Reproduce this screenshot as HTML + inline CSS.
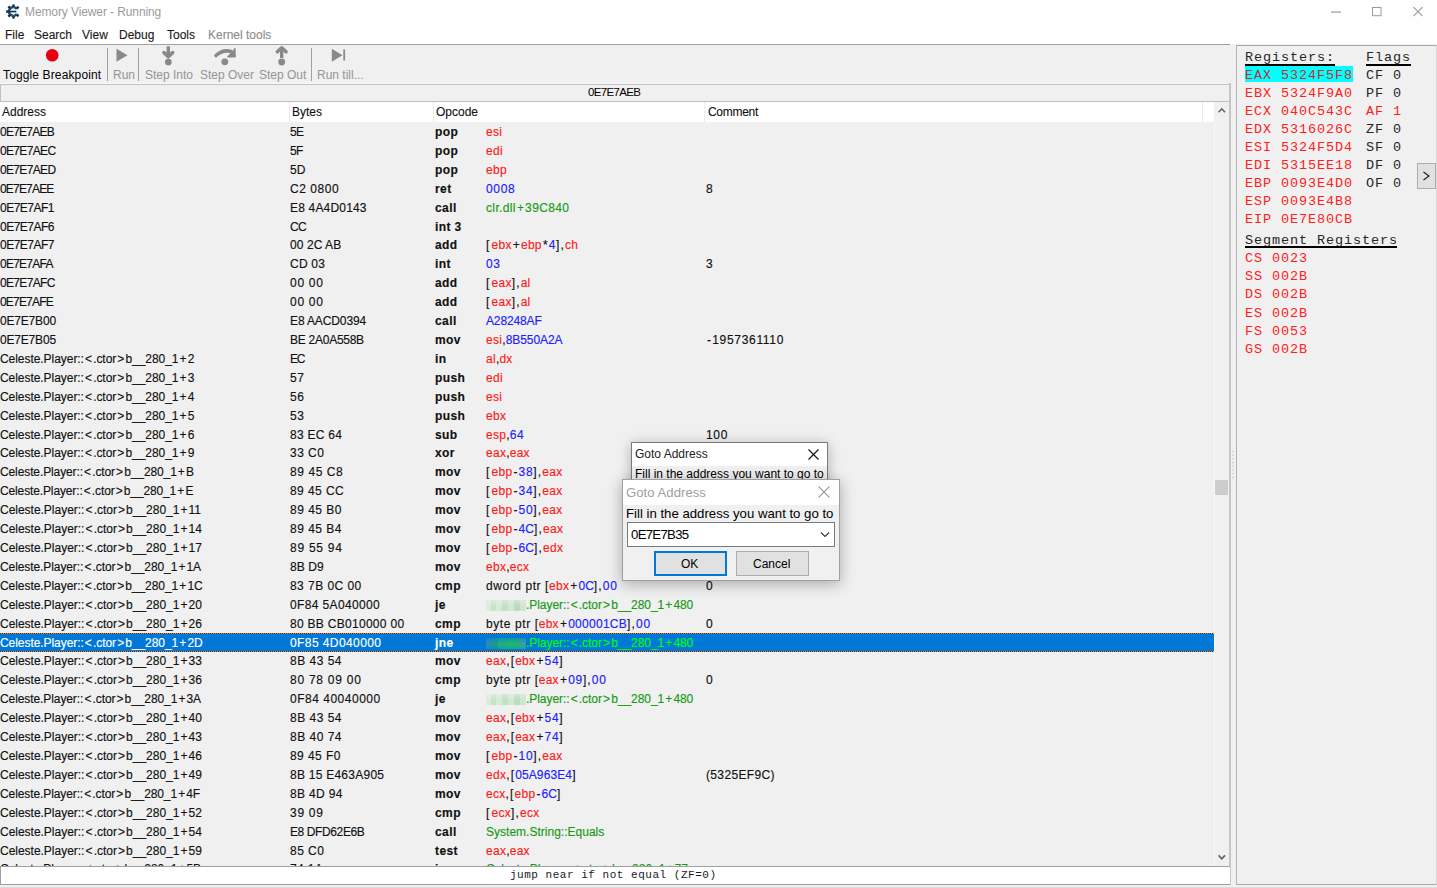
<!DOCTYPE html>
<html><head><meta charset="utf-8">
<style>
*{margin:0;padding:0;box-sizing:border-box}
html,body{width:1437px;height:888px;overflow:hidden;background:#f0f0f0;font-family:"Liberation Sans",sans-serif;font-size:12px;color:#000}
.abs{position:absolute}
#title{position:absolute;left:0;top:0;width:1437px;height:44px;background:#fff}
#ttext{position:absolute;left:25px;top:4px;color:#9c9c9c;font-size:12px;line-height:16px;letter-spacing:-0.1px}
.menu{position:absolute;top:28px;font-size:12px;line-height:14px;color:#1a1a1a;-webkit-text-stroke:0.12px}
#tbline{position:absolute;left:0;top:44px;width:1230px;height:1px;background:#a0a0a0}
.tbl{position:absolute;top:68px;font-size:12px;line-height:14px;color:#959595;white-space:nowrap}
.sep{position:absolute;top:48px;width:1px;height:33px;background:#a0a0a0}
#addrbar{position:absolute;left:0;top:84px;width:1230px;height:18px;background:#f0f0f0;border-top:1px solid #c2c2c2;border-left:1px solid #c2c2c2;border-bottom:1px solid #bdbdbd;border-right:1px solid #a8a8a8;box-shadow:0 -1px 0 #fafafa}
#addrtxt{position:absolute;left:588px;top:86px;font-size:11.5px;line-height:13px;color:#000;letter-spacing:-0.66px}
#hdr{position:absolute;left:0;top:102px;width:1214px;height:20px;background:#fff}
.hc{position:absolute;top:105px;font-size:12px;line-height:14px;color:#111;-webkit-text-stroke:0.1px}
.hs{position:absolute;top:102px;width:1px;height:20px;background:#ececec}
#list{position:absolute;left:0;top:122px;width:1214px;height:744px;overflow:hidden;background:#f0f0f0}
.row{position:absolute;left:0;width:1214px;height:19px;white-space:nowrap;font-size:12px;line-height:19px;-webkit-text-stroke:0.15px;color:#111}
.row span{position:absolute;margin-top:1px}
.row .a{left:0;top:0}
.row .by{left:290px;top:0}
.row .op{left:435px;top:0;font-weight:bold;letter-spacing:0.4px}
.row .arg{left:486px;top:0}
.row .arg span{position:static;margin-top:0}
.pp{font-style:normal}
.row .cm{left:706px;top:0}
.r{color:#ff1a1a}.b{color:#2020ff}.g{color:#169a16}.k{color:#111}
.blur{display:inline-block;width:40px;height:11px;vertical-align:-2px;background:linear-gradient(180deg,rgba(240,240,240,0.45),rgba(240,240,240,0) 55%),linear-gradient(90deg,#dcecdc 0 12%,#c8e4c8 12% 25%,#d6ead6 25% 40%,#c2e0c2 40% 55%,#d2e8d2 55% 70%,#bcdcbc 70% 84%,#cfe6cf 84% 100%)}
.hl{background:#0078d7;color:#fff}
.hl::before,.hl::after{content:"";position:absolute;left:0;width:1214px;height:1px;background:repeating-linear-gradient(90deg,#2a3040 0 1px,#e88a3a 1px 2px)}
.hl::before{top:0}.hl::after{bottom:0}
.hl .r,.hl .k{color:#fff}.hl .g{color:#00ff00}
.hl .blur{background:linear-gradient(180deg,rgba(0,120,215,0.55),rgba(0,120,215,0.1) 50%,rgba(0,120,215,0.3)),linear-gradient(90deg,#2a8fb0 0 14%,#1d9f8a 14% 30%,#22b870 30% 55%,#1fc064 55% 80%,#3aa890 80% 100%)}
#vscroll{position:absolute;left:1214px;top:102px;width:16px;height:764px;background:#f0f0f0}
#status{position:absolute;left:0;top:866px;width:1230px;height:19px;background:#fff;border-top:1px solid #a0a0a0;border-left:1px solid #a0a0a0;border-bottom:1px solid #a0a0a0}
#stxt{position:absolute;left:510px;top:867px;font-family:"Liberation Mono",monospace;font-size:11px;letter-spacing:0.52px;line-height:16px;color:#1a1a1a}
#reg{position:absolute;left:1236px;top:45px;width:201px;height:840px;background:#f0f0f0;border-left:1px solid #b4b4b4;border-top:1px solid #a8a8a8;border-bottom:1px solid #a8a8a8;border-right:1px solid #dadada}
.rg{position:absolute;font-family:"Liberation Mono",monospace;font-size:13.5px;letter-spacing:0.9px;line-height:18px;color:#ff2020;white-space:pre}
.rgk{color:#262626}
.dt{font-size:12px;line-height:16px;white-space:nowrap}
.dt2{font-size:13.2px;line-height:17px;white-space:nowrap}
</style></head><body>
<div id="title"></div>
<svg class="abs" style="left:4px;top:3px" width="18" height="18" viewBox="0 0 18 18">
<path d="M12.78 5.97 A4.3 4.3 0 1 0 12.78 11.03" fill="none" stroke="#10334f" stroke-width="2.3"/>
<path d="M13.02 6.35 A4.3 4.3 0 1 0 13.02 10.65" fill="none" stroke="#1d6a98" stroke-width="0.9"/>
<g fill="#10334f"><rect x="12.48" y="3.35" width="2.4" height="2.4" transform="rotate(-42 13.68 4.55)"/><rect x="8.31" y="1.40" width="2.4" height="2.4" transform="rotate(-88 9.51 2.60)"/><rect x="4.00" y="3.06" width="2.4" height="2.4" transform="rotate(-134 5.20 4.26)"/><rect x="2.20" y="7.30" width="2.4" height="2.4" transform="rotate(180 3.40 8.50)"/><rect x="4.00" y="11.54" width="2.4" height="2.4" transform="rotate(134 5.20 12.74)"/><rect x="8.31" y="13.20" width="2.4" height="2.4" transform="rotate(88 9.51 14.40)"/><rect x="12.48" y="11.25" width="2.4" height="2.4" transform="rotate(42 13.68 12.45)"/><rect x="2.8" y="7.7" width="9.6" height="1.7"/></g></svg>
<svg class="abs" style="left:1325px;top:0" width="112" height="24">
<rect x="6" y="11.5" width="10" height="1.2" fill="#9a9a9a"/>
<rect x="47.5" y="7.5" width="8.5" height="8.2" fill="none" stroke="#9a9a9a" stroke-width="1"/>
<path d="M88.5 7.2 L97.5 16.2 M97.5 7.2 L88.5 16.2" stroke="#9a9a9a" stroke-width="1.1"/>
</svg>
<div id="ttext">Memory Viewer - Running</div>
<div class="menu" style="left:5px">File</div>
<div class="menu" style="left:34px">Search</div>
<div class="menu" style="left:82px">View</div>
<div class="menu" style="left:119px">Debug</div>
<div class="menu" style="left:167px">Tools</div>
<div class="menu" style="left:208px;color:#8c8c8c">Kernel tools</div>
<div id="tbline"></div>

<svg class="abs" style="left:45px;top:48px" width="15" height="15"><circle cx="7.2" cy="7.2" r="6.3" fill="#e50012"/></svg>
<div class="tbl" style="left:3px;color:#000;letter-spacing:0.13px">Toggle Breakpoint</div>
<div class="sep" style="left:107px"></div>
<div class="tbl" style="left:113px">Run</div>
<svg class="abs" style="left:110px;top:44px" width="250" height="24">
<g fill="#898989">
<path d="M6.5 4.7 L17.5 11.2 L6.5 17.8 Z"/>
<rect x="56.6" y="2.3" width="3.4" height="9.2"/>
<path d="M54 8.6 L58.3 12.6 L62.6 8.6" fill="none" stroke="#898989" stroke-width="3.6" stroke-linejoin="round" stroke-linecap="round"/>
<circle cx="58.3" cy="18.1" r="3.4"/>
<path d="M106 11.5 Q112.5 5.5 120.5 7.2" fill="none" stroke="#898989" stroke-width="3.6" stroke-linecap="round"/>
<path d="M117.5 13 L125.3 13 L125 4.3 Z" stroke="#898989" stroke-width="1" stroke-linejoin="round"/>
<circle cx="114.8" cy="17.8" r="3.4"/>
<rect x="170" y="5.5" width="3.4" height="8.5"/>
<path d="M167.4 7.8 L171.7 3.8 L176 7.8" fill="none" stroke="#898989" stroke-width="3.6" stroke-linejoin="round" stroke-linecap="round"/>
<circle cx="171.7" cy="18" r="3.4"/>
<path d="M221.8 4.7 L232.5 11.2 L221.8 17.7 Z"/>
<rect x="233.3" y="5.5" width="1.8" height="11"/>
</g></svg>
<div class="sep" style="left:138px"></div>
<div class="tbl" style="left:145px">Step Into</div>
<div class="tbl" style="left:200px">Step Over</div>
<div class="tbl" style="left:259px">Step Out</div>
<div class="sep" style="left:311px"></div>
<div class="tbl" style="left:317px">Run till...</div>

<div id="addrbar"></div>
<div id="addrtxt">0E7E7AEB</div>
<div id="hdr"></div>
<div class="hc" style="left:2px">Address</div>
<div class="hs" style="left:289px"></div>
<div class="hc" style="left:292px">Bytes</div>
<div class="hs" style="left:433px"></div>
<div class="hc" style="left:436px">Opcode</div>
<div class="hs" style="left:704px"></div>
<div class="hc" style="left:708px;letter-spacing:-0.3px">Comment</div>
<div class="hs" style="left:1202px"></div>

<div id="list">
<div class="row" style="top:0.00px"><span class="a" style="letter-spacing:-0.75px">0E7E7AEB</span><span class="by" style="letter-spacing:-0.56px">5E</span><span class="op">pop</span><span class="arg"><span class="r" style="letter-spacing:0.29px">esi</span></span><span class="cm"></span></div>
<div class="row" style="top:18.91px"><span class="a" style="letter-spacing:-0.66px">0E7E7AEC</span><span class="by" style="letter-spacing:-0.56px">5F</span><span class="op">pop</span><span class="arg"><span class="r" style="letter-spacing:0.29px">edi</span></span><span class="cm"></span></div>
<div class="row" style="top:37.82px"><span class="a" style="letter-spacing:-0.66px">0E7E7AED</span><span class="by" style="letter-spacing:0.04px">5D</span><span class="op">pop</span><span class="arg"><span class="r" style="letter-spacing:0.29px">ebp</span></span><span class="cm"></span></div>
<div class="row" style="top:56.73px"><span class="a" style="letter-spacing:-0.81px">0E7E7AEE</span><span class="by" style="letter-spacing:0.54px">C2 0800</span><span class="op">ret</span><span class="arg"><span class="b" style="letter-spacing:0.69px">0008</span></span><span class="cm" style="letter-spacing:0.69px">8</span></div>
<div class="row" style="top:75.64px"><span class="a" style="letter-spacing:-0.50px">0E7E7AF1</span><span class="by" style="letter-spacing:0.18px">E8 4A4D0143</span><span class="op">call</span><span class="arg"><span class="g" style="letter-spacing:0.36px">clr.dll<i class="pp" style="padding-left:1.11px;padding-right:0.75px">+</i>39C840</span></span><span class="cm"></span></div>
<div class="row" style="top:94.55px"><span class="a" style="letter-spacing:-0.50px">0E7E7AF6</span><span class="by" style="letter-spacing:-0.60px">CC</span><span class="op">int 3</span><span class="arg"></span><span class="cm"></span></div>
<div class="row" style="top:113.46px"><span class="a" style="letter-spacing:-0.50px">0E7E7AF7</span><span class="by" style="letter-spacing:0.07px">00 2C AB</span><span class="op">add</span><span class="arg"><span class="k" style="letter-spacing:2.14px">[</span><span class="r" style="letter-spacing:0.29px">ebx</span><span class="k"><i class="pp" style="padding-left:1.11px;padding-right:1.11px">+</i></span><span class="r" style="letter-spacing:0.29px">ebp</span><span class="k"><i class="pp" style="padding-left:1.11px;padding-right:1.11px">*</i></span><span class="b" style="letter-spacing:0.69px">4</span><span class="k" style="letter-spacing:1.13px">],</span><span class="r" style="letter-spacing:0.29px">ch</span></span><span class="cm"></span></div>
<div class="row" style="top:132.37px"><span class="a" style="letter-spacing:-0.75px">0E7E7AFA</span><span class="by" style="letter-spacing:0.22px">CD 03</span><span class="op">int</span><span class="arg"><span class="b" style="letter-spacing:0.69px">03</span></span><span class="cm" style="letter-spacing:0.69px">3</span></div>
<div class="row" style="top:151.28px"><span class="a" style="letter-spacing:-0.66px">0E7E7AFC</span><span class="by" style="letter-spacing:0.73px">00 00</span><span class="op">add</span><span class="arg"><span class="k" style="letter-spacing:2.14px">[</span><span class="r" style="letter-spacing:0.29px">eax</span><span class="k" style="letter-spacing:1.13px">],</span><span class="r" style="letter-spacing:0.29px">al</span></span><span class="cm"></span></div>
<div class="row" style="top:170.19px"><span class="a" style="letter-spacing:-0.81px">0E7E7AFE</span><span class="by" style="letter-spacing:0.73px">00 00</span><span class="op">add</span><span class="arg"><span class="k" style="letter-spacing:2.14px">[</span><span class="r" style="letter-spacing:0.29px">eax</span><span class="k" style="letter-spacing:1.13px">],</span><span class="r" style="letter-spacing:0.29px">al</span></span><span class="cm"></span></div>
<div class="row" style="top:189.10px"><span class="a" style="letter-spacing:-0.19px">0E7E7B00</span><span class="by" style="letter-spacing:-0.12px">E8 AACD0394</span><span class="op">call</span><span class="arg"><span class="b" style="letter-spacing:-0.13px">A28248AF</span></span><span class="cm"></span></div>
<div class="row" style="top:208.01px"><span class="a" style="letter-spacing:-0.19px">0E7E7B05</span><span class="by" style="letter-spacing:-0.26px">BE 2A0A558B</span><span class="op">mov</span><span class="arg"><span class="r" style="letter-spacing:0.29px">esi</span><span class="k" style="letter-spacing:0.12px">,</span><span class="b" style="letter-spacing:-0.07px">8B550A2A</span></span><span class="cm" style="letter-spacing:0.69px"><i class="pp" style="padding-left:1.11px;padding-right:0.42px">-</i>1957361110</span></div>
<div class="row" style="top:226.92px"><span class="a" style="letter-spacing:-0.05px">Celeste.Player::<i class="pp" style="padding-left:1.11px;padding-right:1.16px">&lt;</i>.ctor<i class="pp" style="padding-left:1.11px;padding-right:1.16px">&gt;</i>b__280_1<i class="pp" style="padding-left:1.11px;padding-right:1.16px">+</i>2</span><span class="by" style="letter-spacing:-1.21px">EC</span><span class="op">in</span><span class="arg"><span class="r" style="letter-spacing:0.29px">al</span><span class="k" style="letter-spacing:0.12px">,</span><span class="r" style="letter-spacing:0.29px">dx</span></span><span class="cm"></span></div>
<div class="row" style="top:245.83px"><span class="a" style="letter-spacing:-0.05px">Celeste.Player::<i class="pp" style="padding-left:1.11px;padding-right:1.16px">&lt;</i>.ctor<i class="pp" style="padding-left:1.11px;padding-right:1.16px">&gt;</i>b__280_1<i class="pp" style="padding-left:1.11px;padding-right:1.16px">+</i>3</span><span class="by" style="letter-spacing:0.69px">57</span><span class="op">push</span><span class="arg"><span class="r" style="letter-spacing:0.29px">edi</span></span><span class="cm"></span></div>
<div class="row" style="top:264.74px"><span class="a" style="letter-spacing:-0.05px">Celeste.Player::<i class="pp" style="padding-left:1.11px;padding-right:1.16px">&lt;</i>.ctor<i class="pp" style="padding-left:1.11px;padding-right:1.16px">&gt;</i>b__280_1<i class="pp" style="padding-left:1.11px;padding-right:1.16px">+</i>4</span><span class="by" style="letter-spacing:0.69px">56</span><span class="op">push</span><span class="arg"><span class="r" style="letter-spacing:0.29px">esi</span></span><span class="cm"></span></div>
<div class="row" style="top:283.65px"><span class="a" style="letter-spacing:-0.05px">Celeste.Player::<i class="pp" style="padding-left:1.11px;padding-right:1.16px">&lt;</i>.ctor<i class="pp" style="padding-left:1.11px;padding-right:1.16px">&gt;</i>b__280_1<i class="pp" style="padding-left:1.11px;padding-right:1.16px">+</i>5</span><span class="by" style="letter-spacing:0.69px">53</span><span class="op">push</span><span class="arg"><span class="r" style="letter-spacing:0.29px">ebx</span></span><span class="cm"></span></div>
<div class="row" style="top:302.56px"><span class="a" style="letter-spacing:-0.05px">Celeste.Player::<i class="pp" style="padding-left:1.11px;padding-right:1.16px">&lt;</i>.ctor<i class="pp" style="padding-left:1.11px;padding-right:1.16px">&gt;</i>b__280_1<i class="pp" style="padding-left:1.11px;padding-right:1.16px">+</i>6</span><span class="by" style="letter-spacing:0.27px">83 EC 64</span><span class="op">sub</span><span class="arg"><span class="r" style="letter-spacing:0.29px">esp</span><span class="k" style="letter-spacing:0.12px">,</span><span class="b" style="letter-spacing:0.69px">64</span></span><span class="cm" style="letter-spacing:0.69px">100</span></div>
<div class="row" style="top:321.47px"><span class="a" style="letter-spacing:-0.05px">Celeste.Player::<i class="pp" style="padding-left:1.11px;padding-right:1.16px">&lt;</i>.ctor<i class="pp" style="padding-left:1.11px;padding-right:1.16px">&gt;</i>b__280_1<i class="pp" style="padding-left:1.11px;padding-right:1.16px">+</i>9</span><span class="by" style="letter-spacing:0.47px">33 C0</span><span class="op">xor</span><span class="arg"><span class="r" style="letter-spacing:0.29px">eax</span><span class="k" style="letter-spacing:0.12px">,</span><span class="r" style="letter-spacing:0.29px">eax</span></span><span class="cm"></span></div>
<div class="row" style="top:340.38px"><span class="a" style="letter-spacing:-0.11px">Celeste.Player::<i class="pp" style="padding-left:1.11px;padding-right:1.22px">&lt;</i>.ctor<i class="pp" style="padding-left:1.11px;padding-right:1.22px">&gt;</i>b__280_1<i class="pp" style="padding-left:1.11px;padding-right:1.22px">+</i>B</span><span class="by" style="letter-spacing:0.58px">89 45 C8</span><span class="op">mov</span><span class="arg"><span class="k" style="letter-spacing:2.14px">[</span><span class="r" style="letter-spacing:0.29px">ebp</span><span class="k"><i class="pp" style="padding-left:1.11px;padding-right:1.11px">-</i></span><span class="b" style="letter-spacing:0.69px">38</span><span class="k" style="letter-spacing:1.13px">],</span><span class="r" style="letter-spacing:0.29px">eax</span></span><span class="cm"></span></div>
<div class="row" style="top:359.29px"><span class="a" style="letter-spacing:-0.13px">Celeste.Player::<i class="pp" style="padding-left:1.11px;padding-right:1.24px">&lt;</i>.ctor<i class="pp" style="padding-left:1.11px;padding-right:1.24px">&gt;</i>b__280_1<i class="pp" style="padding-left:1.11px;padding-right:1.24px">+</i>E</span><span class="by" style="letter-spacing:0.42px">89 45 CC</span><span class="op">mov</span><span class="arg"><span class="k" style="letter-spacing:2.14px">[</span><span class="r" style="letter-spacing:0.29px">ebp</span><span class="k"><i class="pp" style="padding-left:1.11px;padding-right:1.11px">-</i></span><span class="b" style="letter-spacing:0.69px">34</span><span class="k" style="letter-spacing:1.13px">],</span><span class="r" style="letter-spacing:0.29px">eax</span></span><span class="cm"></span></div>
<div class="row" style="top:378.20px"><span class="a" style="letter-spacing:-0.02px">Celeste.Player::<i class="pp" style="padding-left:1.11px;padding-right:1.13px">&lt;</i>.ctor<i class="pp" style="padding-left:1.11px;padding-right:1.13px">&gt;</i>b__280_1<i class="pp" style="padding-left:1.11px;padding-right:1.13px">+</i>11</span><span class="by" style="letter-spacing:0.49px">89 45 B0</span><span class="op">mov</span><span class="arg"><span class="k" style="letter-spacing:2.14px">[</span><span class="r" style="letter-spacing:0.29px">ebp</span><span class="k"><i class="pp" style="padding-left:1.11px;padding-right:1.11px">-</i></span><span class="b" style="letter-spacing:0.69px">50</span><span class="k" style="letter-spacing:1.13px">],</span><span class="r" style="letter-spacing:0.29px">eax</span></span><span class="cm"></span></div>
<div class="row" style="top:397.11px"><span class="a" style="letter-spacing:-0.02px">Celeste.Player::<i class="pp" style="padding-left:1.11px;padding-right:1.13px">&lt;</i>.ctor<i class="pp" style="padding-left:1.11px;padding-right:1.13px">&gt;</i>b__280_1<i class="pp" style="padding-left:1.11px;padding-right:1.13px">+</i>14</span><span class="by" style="letter-spacing:0.49px">89 45 B4</span><span class="op">mov</span><span class="arg"><span class="k" style="letter-spacing:2.14px">[</span><span class="r" style="letter-spacing:0.29px">ebp</span><span class="k"><i class="pp" style="padding-left:1.11px;padding-right:1.11px">-</i></span><span class="b" style="letter-spacing:0.04px">4C</span><span class="k" style="letter-spacing:1.13px">],</span><span class="r" style="letter-spacing:0.29px">eax</span></span><span class="cm"></span></div>
<div class="row" style="top:416.02px"><span class="a" style="letter-spacing:-0.02px">Celeste.Player::<i class="pp" style="padding-left:1.11px;padding-right:1.13px">&lt;</i>.ctor<i class="pp" style="padding-left:1.11px;padding-right:1.13px">&gt;</i>b__280_1<i class="pp" style="padding-left:1.11px;padding-right:1.13px">+</i>17</span><span class="by" style="letter-spacing:0.74px">89 55 94</span><span class="op">mov</span><span class="arg"><span class="k" style="letter-spacing:2.14px">[</span><span class="r" style="letter-spacing:0.29px">ebp</span><span class="k"><i class="pp" style="padding-left:1.11px;padding-right:1.11px">-</i></span><span class="b" style="letter-spacing:0.04px">6C</span><span class="k" style="letter-spacing:1.13px">],</span><span class="r" style="letter-spacing:0.29px">edx</span></span><span class="cm"></span></div>
<div class="row" style="top:434.93px"><span class="a" style="letter-spacing:-0.09px">Celeste.Player::<i class="pp" style="padding-left:1.11px;padding-right:1.20px">&lt;</i>.ctor<i class="pp" style="padding-left:1.11px;padding-right:1.20px">&gt;</i>b__280_1<i class="pp" style="padding-left:1.11px;padding-right:1.20px">+</i>1A</span><span class="by" style="letter-spacing:0.07px">8B D9</span><span class="op">mov</span><span class="arg"><span class="r" style="letter-spacing:0.29px">ebx</span><span class="k" style="letter-spacing:0.12px">,</span><span class="r" style="letter-spacing:0.29px">ecx</span></span><span class="cm"></span></div>
<div class="row" style="top:453.84px"><span class="a" style="letter-spacing:-0.06px">Celeste.Player::<i class="pp" style="padding-left:1.11px;padding-right:1.17px">&lt;</i>.ctor<i class="pp" style="padding-left:1.11px;padding-right:1.17px">&gt;</i>b__280_1<i class="pp" style="padding-left:1.11px;padding-right:1.17px">+</i>1C</span><span class="by" style="letter-spacing:0.45px">83 7B 0C 00</span><span class="op">cmp</span><span class="arg"><span class="k" style="letter-spacing:0.57px">dword ptr [</span><span class="r" style="letter-spacing:0.29px">ebx</span><span class="k"><i class="pp" style="padding-left:1.11px;padding-right:1.11px">+</i></span><span class="b" style="letter-spacing:0.04px">0C</span><span class="k" style="letter-spacing:1.13px">],</span><span class="b" style="letter-spacing:0.69px">00</span></span><span class="cm" style="letter-spacing:0.69px">0</span></div>
<div class="row" style="top:472.75px"><span class="a" style="letter-spacing:-0.02px">Celeste.Player::<i class="pp" style="padding-left:1.11px;padding-right:1.13px">&lt;</i>.ctor<i class="pp" style="padding-left:1.11px;padding-right:1.13px">&gt;</i>b__280_1<i class="pp" style="padding-left:1.11px;padding-right:1.13px">+</i>20</span><span class="by" style="letter-spacing:0.36px">0F84 5A040000</span><span class="op">je</span><span class="arg"><i class="blur"></i><span class="g" style="letter-spacing:-0.05px">.Player::<i class="pp" style="padding-left:1.11px;padding-right:1.16px">&lt;</i>.ctor<i class="pp" style="padding-left:1.11px;padding-right:1.16px">&gt;</i>b__280_1<i class="pp" style="padding-left:1.11px;padding-right:1.16px">+</i>480</span></span><span class="cm"></span></div>
<div class="row" style="top:491.66px"><span class="a" style="letter-spacing:-0.02px">Celeste.Player::<i class="pp" style="padding-left:1.11px;padding-right:1.13px">&lt;</i>.ctor<i class="pp" style="padding-left:1.11px;padding-right:1.13px">&gt;</i>b__280_1<i class="pp" style="padding-left:1.11px;padding-right:1.13px">+</i>26</span><span class="by" style="letter-spacing:0.29px">80 BB CB010000 00</span><span class="op">cmp</span><span class="arg"><span class="k" style="letter-spacing:0.60px">byte ptr [</span><span class="r" style="letter-spacing:0.29px">ebx</span><span class="k"><i class="pp" style="padding-left:1.11px;padding-right:1.11px">+</i></span><span class="b" style="letter-spacing:0.28px">000001CB</span><span class="k" style="letter-spacing:1.13px">],</span><span class="b" style="letter-spacing:0.69px">00</span></span><span class="cm" style="letter-spacing:0.69px">0</span></div>
<div class="row hl" style="top:510.57px"><span class="a" style="letter-spacing:-0.06px">Celeste.Player::<i class="pp" style="padding-left:1.11px;padding-right:1.17px">&lt;</i>.ctor<i class="pp" style="padding-left:1.11px;padding-right:1.17px">&gt;</i>b__280_1<i class="pp" style="padding-left:1.11px;padding-right:1.17px">+</i>2D</span><span class="by" style="letter-spacing:0.41px">0F85 4D040000</span><span class="op">jne</span><span class="arg"><i class="blur"></i><span class="g" style="letter-spacing:-0.05px">.Player::<i class="pp" style="padding-left:1.11px;padding-right:1.16px">&lt;</i>.ctor<i class="pp" style="padding-left:1.11px;padding-right:1.16px">&gt;</i>b__280_1<i class="pp" style="padding-left:1.11px;padding-right:1.16px">+</i>480</span></span><span class="cm"></span></div>
<div class="row" style="top:529.48px"><span class="a" style="letter-spacing:-0.02px">Celeste.Player::<i class="pp" style="padding-left:1.11px;padding-right:1.13px">&lt;</i>.ctor<i class="pp" style="padding-left:1.11px;padding-right:1.13px">&gt;</i>b__280_1<i class="pp" style="padding-left:1.11px;padding-right:1.13px">+</i>33</span><span class="by" style="letter-spacing:0.49px">8B 43 54</span><span class="op">mov</span><span class="arg"><span class="r" style="letter-spacing:0.29px">eax</span><span class="k" style="letter-spacing:1.13px">,[</span><span class="r" style="letter-spacing:0.29px">ebx</span><span class="k"><i class="pp" style="padding-left:1.11px;padding-right:1.11px">+</i></span><span class="b" style="letter-spacing:0.69px">54</span><span class="k" style="letter-spacing:2.14px">]</span></span><span class="cm"></span></div>
<div class="row" style="top:548.39px"><span class="a" style="letter-spacing:-0.02px">Celeste.Player::<i class="pp" style="padding-left:1.11px;padding-right:1.13px">&lt;</i>.ctor<i class="pp" style="padding-left:1.11px;padding-right:1.13px">&gt;</i>b__280_1<i class="pp" style="padding-left:1.11px;padding-right:1.13px">+</i>36</span><span class="by" style="letter-spacing:0.75px">80 78 09 00</span><span class="op">cmp</span><span class="arg"><span class="k" style="letter-spacing:0.60px">byte ptr [</span><span class="r" style="letter-spacing:0.29px">eax</span><span class="k"><i class="pp" style="padding-left:1.11px;padding-right:1.11px">+</i></span><span class="b" style="letter-spacing:0.69px">09</span><span class="k" style="letter-spacing:1.13px">],</span><span class="b" style="letter-spacing:0.69px">00</span></span><span class="cm" style="letter-spacing:0.69px">0</span></div>
<div class="row" style="top:567.30px"><span class="a" style="letter-spacing:-0.09px">Celeste.Player::<i class="pp" style="padding-left:1.11px;padding-right:1.20px">&lt;</i>.ctor<i class="pp" style="padding-left:1.11px;padding-right:1.20px">&gt;</i>b__280_1<i class="pp" style="padding-left:1.11px;padding-right:1.20px">+</i>3A</span><span class="by" style="letter-spacing:0.51px">0F84 40040000</span><span class="op">je</span><span class="arg"><i class="blur"></i><span class="g" style="letter-spacing:-0.05px">.Player::<i class="pp" style="padding-left:1.11px;padding-right:1.16px">&lt;</i>.ctor<i class="pp" style="padding-left:1.11px;padding-right:1.16px">&gt;</i>b__280_1<i class="pp" style="padding-left:1.11px;padding-right:1.16px">+</i>480</span></span><span class="cm"></span></div>
<div class="row" style="top:586.21px"><span class="a" style="letter-spacing:-0.02px">Celeste.Player::<i class="pp" style="padding-left:1.11px;padding-right:1.13px">&lt;</i>.ctor<i class="pp" style="padding-left:1.11px;padding-right:1.13px">&gt;</i>b__280_1<i class="pp" style="padding-left:1.11px;padding-right:1.13px">+</i>40</span><span class="by" style="letter-spacing:0.49px">8B 43 54</span><span class="op">mov</span><span class="arg"><span class="r" style="letter-spacing:0.29px">eax</span><span class="k" style="letter-spacing:1.13px">,[</span><span class="r" style="letter-spacing:0.29px">ebx</span><span class="k"><i class="pp" style="padding-left:1.11px;padding-right:1.11px">+</i></span><span class="b" style="letter-spacing:0.69px">54</span><span class="k" style="letter-spacing:2.14px">]</span></span><span class="cm"></span></div>
<div class="row" style="top:605.12px"><span class="a" style="letter-spacing:-0.02px">Celeste.Player::<i class="pp" style="padding-left:1.11px;padding-right:1.13px">&lt;</i>.ctor<i class="pp" style="padding-left:1.11px;padding-right:1.13px">&gt;</i>b__280_1<i class="pp" style="padding-left:1.11px;padding-right:1.13px">+</i>43</span><span class="by" style="letter-spacing:0.49px">8B 40 74</span><span class="op">mov</span><span class="arg"><span class="r" style="letter-spacing:0.29px">eax</span><span class="k" style="letter-spacing:1.13px">,[</span><span class="r" style="letter-spacing:0.29px">eax</span><span class="k"><i class="pp" style="padding-left:1.11px;padding-right:1.11px">+</i></span><span class="b" style="letter-spacing:0.69px">74</span><span class="k" style="letter-spacing:2.14px">]</span></span><span class="cm"></span></div>
<div class="row" style="top:624.03px"><span class="a" style="letter-spacing:-0.02px">Celeste.Player::<i class="pp" style="padding-left:1.11px;padding-right:1.13px">&lt;</i>.ctor<i class="pp" style="padding-left:1.11px;padding-right:1.13px">&gt;</i>b__280_1<i class="pp" style="padding-left:1.11px;padding-right:1.13px">+</i>46</span><span class="by" style="letter-spacing:0.43px">89 45 F0</span><span class="op">mov</span><span class="arg"><span class="k" style="letter-spacing:2.14px">[</span><span class="r" style="letter-spacing:0.29px">ebp</span><span class="k"><i class="pp" style="padding-left:1.11px;padding-right:1.11px">-</i></span><span class="b" style="letter-spacing:0.69px">10</span><span class="k" style="letter-spacing:1.13px">],</span><span class="r" style="letter-spacing:0.29px">eax</span></span><span class="cm"></span></div>
<div class="row" style="top:642.94px"><span class="a" style="letter-spacing:-0.02px">Celeste.Player::<i class="pp" style="padding-left:1.11px;padding-right:1.13px">&lt;</i>.ctor<i class="pp" style="padding-left:1.11px;padding-right:1.13px">&gt;</i>b__280_1<i class="pp" style="padding-left:1.11px;padding-right:1.13px">+</i>49</span><span class="by" style="letter-spacing:0.25px">8B 15 E463A905</span><span class="op">mov</span><span class="arg"><span class="r" style="letter-spacing:0.29px">edx</span><span class="k" style="letter-spacing:1.13px">,[</span><span class="b" style="letter-spacing:0.12px">05A963E4</span><span class="k" style="letter-spacing:2.14px">]</span></span><span class="cm" style="letter-spacing:0.35px">(5325EF9C)</span></div>
<div class="row" style="top:661.85px"><span class="a" style="letter-spacing:-0.10px">Celeste.Player::<i class="pp" style="padding-left:1.11px;padding-right:1.21px">&lt;</i>.ctor<i class="pp" style="padding-left:1.11px;padding-right:1.21px">&gt;</i>b__280_1<i class="pp" style="padding-left:1.11px;padding-right:1.21px">+</i>4F</span><span class="by" style="letter-spacing:0.33px">8B 4D 94</span><span class="op">mov</span><span class="arg"><span class="r" style="letter-spacing:0.29px">ecx</span><span class="k" style="letter-spacing:1.13px">,[</span><span class="r" style="letter-spacing:0.29px">ebp</span><span class="k"><i class="pp" style="padding-left:1.11px;padding-right:1.11px">-</i></span><span class="b" style="letter-spacing:0.04px">6C</span><span class="k" style="letter-spacing:2.14px">]</span></span><span class="cm"></span></div>
<div class="row" style="top:680.76px"><span class="a" style="letter-spacing:-0.02px">Celeste.Player::<i class="pp" style="padding-left:1.11px;padding-right:1.13px">&lt;</i>.ctor<i class="pp" style="padding-left:1.11px;padding-right:1.13px">&gt;</i>b__280_1<i class="pp" style="padding-left:1.11px;padding-right:1.13px">+</i>52</span><span class="by" style="letter-spacing:0.73px">39 09</span><span class="op">cmp</span><span class="arg"><span class="k" style="letter-spacing:2.14px">[</span><span class="r" style="letter-spacing:0.29px">ecx</span><span class="k" style="letter-spacing:1.13px">],</span><span class="r" style="letter-spacing:0.29px">ecx</span></span><span class="cm"></span></div>
<div class="row" style="top:699.67px"><span class="a" style="letter-spacing:-0.02px">Celeste.Player::<i class="pp" style="padding-left:1.11px;padding-right:1.13px">&lt;</i>.ctor<i class="pp" style="padding-left:1.11px;padding-right:1.13px">&gt;</i>b__280_1<i class="pp" style="padding-left:1.11px;padding-right:1.13px">+</i>54</span><span class="by" style="letter-spacing:-0.39px">E8 DFD62E6B</span><span class="op">call</span><span class="arg"><span class="g" style="letter-spacing:0.01px">System.String::Equals</span></span><span class="cm"></span></div>
<div class="row" style="top:718.58px"><span class="a" style="letter-spacing:-0.02px">Celeste.Player::<i class="pp" style="padding-left:1.11px;padding-right:1.13px">&lt;</i>.ctor<i class="pp" style="padding-left:1.11px;padding-right:1.13px">&gt;</i>b__280_1<i class="pp" style="padding-left:1.11px;padding-right:1.13px">+</i>59</span><span class="by" style="letter-spacing:0.47px">85 C0</span><span class="op">test</span><span class="arg"><span class="r" style="letter-spacing:0.29px">eax</span><span class="k" style="letter-spacing:0.12px">,</span><span class="r" style="letter-spacing:0.29px">eax</span></span><span class="cm"></span></div>
<div class="row" style="top:737.49px"><span class="a" style="letter-spacing:-0.09px">Celeste.Player::<i class="pp" style="padding-left:1.11px;padding-right:1.20px">&lt;</i>.ctor<i class="pp" style="padding-left:1.11px;padding-right:1.20px">&gt;</i>b__280_1<i class="pp" style="padding-left:1.11px;padding-right:1.20px">+</i>5B</span><span class="by" style="letter-spacing:0.33px">74 1A</span><span class="op">je</span><span class="arg"><span class="g" style="letter-spacing:-0.02px">Celeste.Player::<i class="pp" style="padding-left:1.11px;padding-right:1.13px">&lt;</i>.ctor<i class="pp" style="padding-left:1.11px;padding-right:1.13px">&gt;</i>b__280_1<i class="pp" style="padding-left:1.11px;padding-right:1.13px">+</i>77</span></span><span class="cm"></span></div>
</div>
<div id="vscroll"></div>
<div class="abs" style="left:1214px;top:122px;width:1px;height:744px;background:#fafafa"></div>
<svg class="abs" style="left:1214px;top:102px" width="16" height="764">
<path d="M4.6 10.2 L7.8 6.8 L11 10.2" fill="none" stroke="#606060" stroke-width="1.6"/>
<path d="M4.6 753.4 L7.8 756.8 L11 753.4" fill="none" stroke="#606060" stroke-width="1.6"/>
<rect x="1" y="378" width="13" height="15" fill="#cdcdcd"/>
</svg>
<div class="abs" style="left:1229px;top:83px;width:2px;height:802px;background:#c6c6c6"></div>

<svg class="abs" style="left:1231px;top:450px" width="5" height="30"><g fill="#a8a8a8"><rect x="1.5" y="1" width="1" height="1"/><rect x="1.5" y="4.7" width="1" height="1"/><rect x="1.5" y="8.4" width="1" height="1"/><rect x="1.5" y="12.1" width="1" height="1"/><rect x="1.5" y="15.8" width="1" height="1"/><rect x="1.5" y="19.5" width="1" height="1"/><rect x="1.5" y="23.2" width="1" height="1"/><rect x="1.5" y="26.9" width="1" height="1"/></g></svg>
<div id="status"></div>
<div id="stxt">jump near if not equal (ZF=0)</div>


<!-- back dialog -->
<div class="abs" style="left:631px;top:442px;width:197px;height:60px;background:#f0f0f0;border:1px solid #7a7a7a;box-shadow:0 2px 12px rgba(0,0,0,0.28)"></div>
<div class="abs" style="left:632px;top:443px;width:195px;height:23px;background:#fff"></div>
<div class="abs dt" style="left:635px;top:446px;color:#222">Goto Address</div>
<svg class="abs" style="left:805px;top:446px" width="16" height="16"><path d="M3.5 3.5 L13.5 13.5 M13.5 3.5 L3.5 13.5" stroke="#1a1a1a" stroke-width="1.2"/></svg>
<div class="abs dt" style="left:635px;top:466px;color:#000">Fill in the address you want to go to</div>
<!-- front dialog -->
<div class="abs" style="left:622px;top:479px;width:218px;height:102px;background:#f0f0f0;border:1px solid #a0a0a0;box-shadow:0 3px 14px rgba(0,0,0,0.30)"></div>
<div class="abs" style="left:623px;top:480px;width:216px;height:25px;background:#fff"></div>
<div class="abs dt2" style="left:626px;top:484px;color:#a0a0a0">Goto Address</div>
<svg class="abs" style="left:815px;top:483px" width="18" height="18"><path d="M3.5 3.5 L14.5 14.5 M14.5 3.5 L3.5 14.5" stroke="#a0a0a0" stroke-width="1.1"/></svg>
<div class="abs dt2" style="left:626px;top:505px;color:#000">Fill in the address you want to go to</div>
<div class="abs" style="left:627px;top:522px;width:208px;height:25px;background:#fff;border:1px solid #7a7a7a"></div>
<div class="abs dt2" style="left:631px;top:526px;color:#000;letter-spacing:-0.7px">0E7E7B35</div>
<svg class="abs" style="left:818px;top:529px" width="14" height="12"><path d="M3 3.5 L7 7.5 L11 3.5" fill="none" stroke="#333" stroke-width="1.1"/></svg>
<div class="abs" style="left:654px;top:551px;width:73px;height:25px;background:#e1e1e1;border:2px solid #0078d7"></div>
<div class="abs dt" style="left:681px;top:556px;color:#000">OK</div>
<div class="abs" style="left:736px;top:551px;width:73px;height:25px;background:#e1e1e1;border:1px solid #adadad"></div>
<div class="abs dt" style="left:753px;top:556px;color:#000">Cancel</div>
<div id="reg"></div>
<div class="rg rgk" style="left:1245px;top:49px">Registers:</div>
<div class="abs" style="left:1245px;top:64px;width:90px;height:2px;background:#000"></div>
<div class="rg rgk" style="left:1366px;top:49px">Flags</div>
<div class="abs" style="left:1366px;top:64px;width:45px;height:2px;background:#000"></div>
<div class="abs" style="left:1245px;top:66px;width:108px;height:16px;background:#00ffff"></div>
<div class="rg" style="left:1245px;top:67.0px;color:#c83030">EAX 5324F5F8</div>
<div class="rg" style="left:1245px;top:85.0px">EBX 5324F9A0</div>
<div class="rg" style="left:1245px;top:103.1px">ECX 040C543C</div>
<div class="rg" style="left:1245px;top:121.1px">EDX 5316026C</div>
<div class="rg" style="left:1245px;top:139.2px">ESI 5324F5D4</div>
<div class="rg" style="left:1245px;top:157.2px">EDI 5315EE18</div>
<div class="rg" style="left:1245px;top:175.2px">EBP 0093E4D0</div>
<div class="rg" style="left:1245px;top:193.3px">ESP 0093E4B8</div>
<div class="rg" style="left:1245px;top:211.3px">EIP 0E7E80CB</div>
<div class="rg rgk" style="left:1366px;top:67.0px">CF 0</div>
<div class="rg rgk" style="left:1366px;top:85.0px">PF 0</div>
<div class="rg" style="left:1366px;top:103.1px">AF 1</div>
<div class="rg rgk" style="left:1366px;top:121.1px">ZF 0</div>
<div class="rg rgk" style="left:1366px;top:139.2px">SF 0</div>
<div class="rg rgk" style="left:1366px;top:157.2px">DF 0</div>
<div class="rg rgk" style="left:1366px;top:175.2px">OF 0</div>
<div class="rg rgk" style="left:1245px;top:231.5px">Segment Registers</div>
<div class="abs" style="left:1245px;top:246px;width:152px;height:2px;background:#000"></div>
<div class="rg" style="left:1245px;top:250.0px">CS 0023</div>
<div class="rg" style="left:1245px;top:268.2px">SS 002B</div>
<div class="rg" style="left:1245px;top:286.4px">DS 002B</div>
<div class="rg" style="left:1245px;top:304.6px">ES 002B</div>
<div class="rg" style="left:1245px;top:322.8px">FS 0053</div>
<div class="rg" style="left:1245px;top:341.0px">GS 002B</div>
<div class="abs" style="left:1417px;top:163px;width:19px;height:26px;background:#e1e1e1;border:1px solid #adadad"></div>
<svg class="abs" style="left:1417px;top:163px" width="19" height="26"><path d="M6.5 9 L12 13 L6.5 17" fill="none" stroke="#202020" stroke-width="1.2"/></svg>
<div class="abs" style="left:0;top:887px;width:1437px;height:1px;background:#dcdcdc"></div>
</body></html>
